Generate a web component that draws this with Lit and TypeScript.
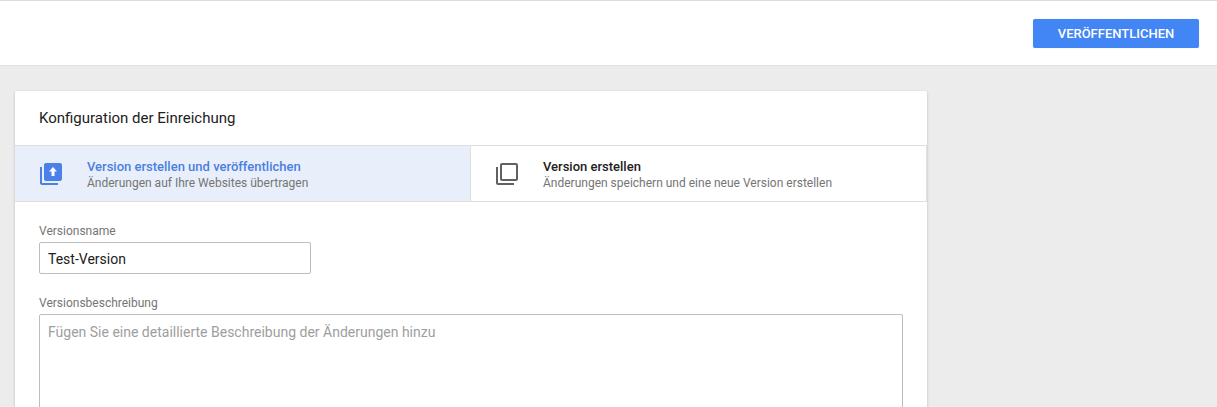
import { LitElement, html, css } from "lit";
import { customElement } from "lit/decorators.js";

@customElement("app-root")
export class AppRoot extends LitElement {
  static styles = css`
    :host { display: block; height: 407px; overflow: hidden; background: #ececec; font-family: Roboto, "Noto Sans", sans-serif; color: #212121; }
    .top { height: 46px; background: #fff; border-top: 1px solid #dcdcdc; border-bottom: 1px solid #e0e0e0; display: flex; align-items: flex-start; justify-content: flex-end; padding: 18px 18px 0 0; box-sizing: content-box; }
    .publish { width: 166px; height: 29px; box-sizing: border-box; border: 0; border-radius: 2px; background: #4285f4; color: #fff; font: 500 13px Roboto, sans-serif; padding: 0; box-shadow: 0 0 1px rgba(0,0,0,.2); }
    .card { margin: 25px 290px 0 15px; background: #fff; box-shadow: 0 1px 3px rgba(0,0,0,.22); border-radius: 2px 2px 0 0; height: 330px; }
    .title { height: 54px; display: flex; align-items: center; padding-left: 24px; font-size: 15px; }
    .tabs { display: flex; height: 57px; box-sizing: border-box; border-top: 1px solid #dfdfdf; border-bottom: 1px solid #dfdfdf; }
    .tab { flex: 1; display: flex; align-items: center; gap: 24px; padding-left: 24px; }
    .tab.active { background: #e8effa; }
    .tab:last-child { border-left: 1px solid #e0e0e0; border-right: 1px solid #e0e0e0; }
    .tab svg { width: 24px; height: 24px; flex: none; }
    .active svg { fill: #4a80e8; }
    .tab:last-child svg { fill: #616161; }
    .text { padding-top: 2px; }
    .name { font-size: 13px; font-weight: 500; line-height: 16px; }
    .active .name { color: #4a80e0; }
    .sub { font-size: 12px; line-height: 16px; color: #757575; }
    .form { padding: 21px 24px 0; }
    label { display: block; font-size: 12px; line-height: 16px; color: #757575; }
    .input { width: 272px; height: 32px; box-sizing: border-box; margin-top: 3px; border: 1px solid #bdbdbd; border-radius: 2px; padding: 2px 8px 0; display: flex; align-items: center; font-size: 14px; }
    .gap { margin-top: 21px; }
    .area { height: 120px; box-sizing: border-box; margin-top: 3px; border: 1px solid #bdbdbd; border-radius: 2px; padding: 7px 8px; font-size: 14px; line-height: 20px; color: #9e9e9e; }
  `;
  render() {
    return html`
      <div class="top"><button class="publish">VERÖFFENTLICHEN</button></div>
      <div class="card">
        <div class="title">Konfiguration der Einreichung</div>
        <div class="tabs">
          <div class="tab active">
            <svg viewBox="0 0 24 24"><path d="M3 5H1v16c0 1.1.9 2 2 2h16v-2H3V5zm18-4H7c-1.1 0-2 .9-2 2v14c0 1.1.9 2 2 2h14c1.1 0 2-.9 2-2V3c0-1.1-.9-2-2-2z"/><path fill="#fff" d="M14 5l-4 4.500h2.500V14h3V9.500H18z"/></svg>
            <div class="text"><div class="name">Version erstellen und veröffentlichen</div><div class="sub">Änderungen auf Ihre Websites übertragen</div></div>
          </div>
          <div class="tab">
            <svg viewBox="0 0 24 24"><path d="M3 5H1v16c0 1.1.9 2 2 2h16v-2H3V5zm18-4H7c-1.1 0-2 .9-2 2v14c0 1.1.9 2 2 2h14c1.1 0 2-.9 2-2V3c0-1.1-.9-2-2-2zm0 16H7V3h14v14z"/></svg>
            <div class="text"><div class="name">Version erstellen</div><div class="sub">Änderungen speichern und eine neue Version erstellen</div></div>
          </div>
        </div>
        <div class="form">
          <label>Versionsname</label>
          <div class="input">Test-Version</div>
          <label class="gap">Versionsbeschreibung</label>
          <div class="area">Fügen Sie eine detaillierte Beschreibung der Änderungen hinzu</div>
        </div>
      </div>
    `;
  }
}
